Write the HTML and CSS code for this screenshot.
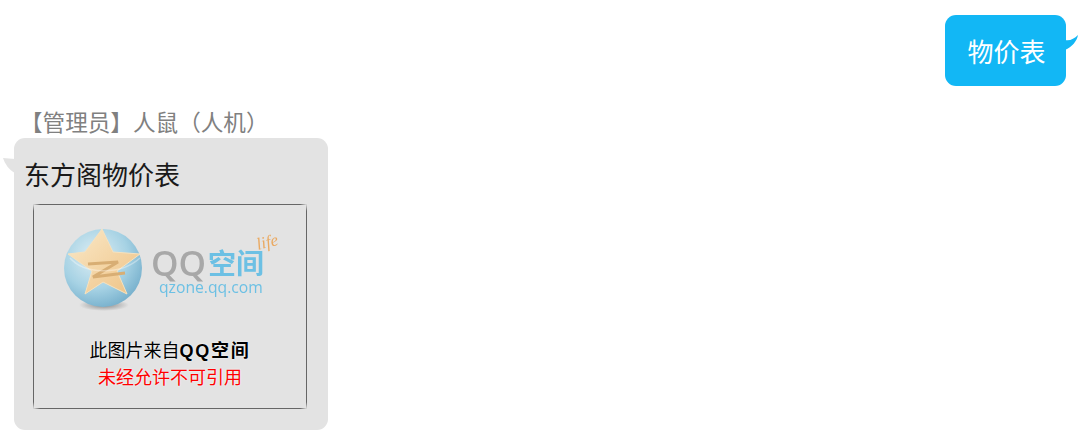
FILE: index.html
```html
<!DOCTYPE html>
<html lang="zh-CN">
<head>
  <meta charset="UTF-8" />
  <title>物价表</title>
  <link rel="stylesheet" href="styles.css">
</head>
<body>
  <div class="msg-self">
    <div class="bubble-self">
      物价表
      <svg class="tail-self" width="14" height="16" viewBox="0 0 14 16"><path d="M0 5 C5 6 9 4 13 0 C12 6 7 12 0 15 Z" fill="#12b7f5"/></svg>
    </div>
  </div>

  <div class="msg-other">
    <div class="name">【管理员】人鼠（人机）</div>
    <div class="bubble-other">
      <svg class="tail-other" width="14" height="16" viewBox="0 0 14 16"><path d="M13 1 L1 0 C3 6 7 12 13 15 Z" fill="#e3e3e3"/></svg>
      <div class="title">东方阁物价表</div>
      <div class="pic">
        <svg class="logo" width="220" height="92" viewBox="0 0 220 92">
          <defs>
            <radialGradient id="globe" cx="40%" cy="35%" r="70%">
              <stop offset="0" stop-color="#e0eff4"/>
              <stop offset="0.6" stop-color="#a6d2e4"/>
              <stop offset="1" stop-color="#74aecb"/>
            </radialGradient>
            <linearGradient id="star" x1="0" y1="0" x2="1" y2="1">
              <stop offset="0" stop-color="#fae9c9"/>
              <stop offset="1" stop-color="#eec284"/>
            </linearGradient>
            <radialGradient id="shade">
              <stop offset="0" stop-color="#888"/>
              <stop offset="1" stop-color="#e3e3e3"/>
            </radialGradient>
          </defs>
          <ellipse cx="42" cy="81" rx="25" ry="6" fill="url(#shade)"/>
          <circle cx="41" cy="44" r="39" fill="url(#globe)"/>
          <path d="M40 5 L51 28 L78 30 L55 47 L65 70 L41 58 L23 70 L30 47 L6 30 L23 28 Z" fill="url(#star)" stroke="#f6e2bf" stroke-width="1"/>
          <path d="M26 40 L56 38 L31 53 L63 49" fill="none" stroke="#d8ae74" stroke-width="3"/>
          <path d="M8 34 C22 50 58 52 78 34" fill="none" stroke="#fff" stroke-opacity="0.35" stroke-width="1.5"/>
          <text class="logo-qq" x="89" y="52">QQ</text>
          <text class="logo-zone" x="146" y="50">空间</text>
          <text class="logo-url" x="97" y="69">qzone.qq.com</text>
          <text class="logo-life" x="196" y="26" transform="rotate(-14 196 26)">life</text>
        </svg>
        <div class="pic-line">此图片来自<b class="pic-brand">QQ空间</b></div>
        <div class="pic-warn">未经允许不可引用</div>
      </div>
    </div>
  </div>
</body>
</html>
```
FILE: styles.css
```css
body, html {
  margin: 0;
  padding: 0;
  height: 100%;
  overflow: hidden;
  background: #fff;
  font-family: "Noto Sans CJK SC", "Liberation Sans", sans-serif;
}

.msg-self {
  display: flex;
  justify-content: flex-end;
  padding: 15px 14px 0 0;
}

.bubble-self {
  position: relative;
  box-sizing: border-box;
  width: 121px;
  height: 71px;
  padding-left: 2px;
  display: flex;
  align-items: center;
  justify-content: center;
  background: #12b7f5;
  border-radius: 11px;
  color: #fff;
  font-size: 26px;
}

.tail-self {
  position: absolute;
  left: 120px;
  top: 20px;
}

.msg-other {
  padding: 20px 0 0 14px;
}

.name {
  margin-left: 6px;
  height: 32px;
  line-height: 32px;
  font-size: 22.6px;
  color: #808080;
}

.bubble-other {
  position: relative;
  box-sizing: border-box;
  width: 314px;
  height: 292px;
  padding: 18px 21px 0 19px;
  background: #e3e3e3;
  border-radius: 11px;
}

.tail-other {
  position: absolute;
  left: -12px;
  top: 20px;
}

.title {
  height: 48px;
  line-height: 36px;
  margin-left: -9px;
  font-size: 26px;
  color: #1a1a1a;
}

/* the frame has four soft lines that do not meet at the corners */
.pic {
  box-sizing: border-box;
  width: 274px;
  height: 205px;
  padding-top: 20px;
  text-align: center;
  background:
    linear-gradient(90deg, transparent, #666 7px, #666 calc(100% - 7px), transparent) top / 100% 1px no-repeat,
    linear-gradient(90deg, transparent, #666 7px, #666 calc(100% - 7px), transparent) bottom / 100% 1px no-repeat,
    linear-gradient(transparent, #666 7px, #666 calc(100% - 7px), transparent) left / 1px 100% no-repeat,
    linear-gradient(transparent, #666 7px, #666 calc(100% - 7px), transparent) right / 1px 100% no-repeat;
}

.logo {
  display: block;
  margin-left: 29px;
  filter: blur(0.4px);
}

.logo-qq {
  font: 600 35px "Open Sans", sans-serif;
  fill: #a8a8a8;
}

.logo-zone {
  font: bold 28px "Noto Sans CJK SC", sans-serif;
  fill: #6cc0e4;
}

.logo-url {
  font: 15.7px "Open Sans", sans-serif;
  fill: #6cc0e4;
}

.logo-life {
  font: italic 17px "Liberation Serif", serif;
  fill: #eaa961;
}

.pic-line {
  margin-top: 20px;
  height: 26px;
  line-height: 26px;
  font-size: 18px;
  color: #000;
  text-shadow: 0 0 2px #fff;
}

.pic-brand {
  font-family: "Liberation Sans", "Noto Sans CJK SC", sans-serif;
  letter-spacing: 1.8px;
}

.pic-warn {
  margin-top: 1px;
  height: 26px;
  line-height: 26px;
  font-size: 18px;
  color: #f00;
  text-shadow: 0 0 2px #fff;
}
```
